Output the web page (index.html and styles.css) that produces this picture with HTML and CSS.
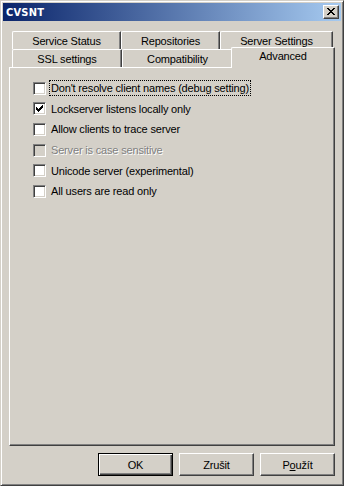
FILE: index.html
```html
<!DOCTYPE html>
<html>
<head>
<meta charset="utf-8">
<link rel="stylesheet" href="styles.css">
</head>
<body>
<div class="window">
  <div class="titlebar">
    <span class="title">CVSNT</span>
    <button class="close" type="button" aria-label="Close">
      <svg width="8" height="7" viewBox="0 0 8 7" shape-rendering="crispEdges">
        <rect x="0" y="0" width="2" height="1"/><rect x="6" y="0" width="2" height="1"/>
        <rect x="1" y="1" width="2" height="1"/><rect x="5" y="1" width="2" height="1"/>
        <rect x="2" y="2" width="4" height="1"/>
        <rect x="3" y="3" width="2" height="1"/>
        <rect x="2" y="4" width="4" height="1"/>
        <rect x="1" y="5" width="2" height="1"/><rect x="5" y="5" width="2" height="1"/>
        <rect x="0" y="6" width="2" height="1"/><rect x="6" y="6" width="2" height="1"/>
      </svg>
    </button>
  </div>
  <div class="content">
    <div class="tabs">
      <div class="tab-row">
        <div class="tab t-service">Service Status</div>
        <div class="tab t-repo">Repositories</div>
        <div class="tab t-server">Server Settings</div>
      </div>
      <div class="tab-row">
        <div class="tab t-ssl">SSL settings</div>
        <div class="tab t-compat">Compatibility</div>
        <div class="tab t-adv active">Advanced</div>
      </div>
    </div>
    <div class="panel">
      <div class="option">
        <span class="cb"></span>
        <span class="label focus">Don't resolve client names (debug setting)</span>
      </div>
      <div class="option">
        <span class="cb">
          <svg width="7" height="7" viewBox="0 0 7 7" shape-rendering="crispEdges">
            <rect x="6" y="0" width="1" height="1"/>
            <rect x="5" y="1" width="2" height="1"/>
            <rect x="0" y="2" width="1" height="1"/><rect x="4" y="2" width="3" height="1"/>
            <rect x="0" y="3" width="2" height="1"/><rect x="3" y="3" width="3" height="1"/>
            <rect x="0" y="4" width="5" height="1"/>
            <rect x="1" y="5" width="3" height="1"/>
            <rect x="2" y="6" width="1" height="1"/>
          </svg>
        </span>
        <span class="label">Lockserver listens locally only</span>
      </div>
      <div class="option">
        <span class="cb"></span>
        <span class="label">Allow clients to trace server</span>
      </div>
      <div class="option disabled">
        <span class="cb"></span>
        <span class="label">Server is case sensitive</span>
      </div>
      <div class="option">
        <span class="cb"></span>
        <span class="label">Unicode server (experimental)</span>
      </div>
      <div class="option">
        <span class="cb"></span>
        <span class="label">All users are read only</span>
      </div>
    </div>
    <div class="buttons">
      <button class="btn default" type="button">OK</button>
      <button class="btn" type="button">Zrušit</button>
      <button class="btn" type="button">P<u>o</u>užít</button>
    </div>
  </div>
</div>
</body>
</html>
```

FILE: styles.css
```css
html, body {
  margin: 0;
  padding: 0;
  background: #d4d0c8;
}

body {
  font-family: "Liberation Sans", Arial, sans-serif;
  font-size: 11px;
  letter-spacing: -0.17px;
  color: #000;
}

.window {
  width: 344px;
  height: 486px;
  box-sizing: border-box;
  background: #d4d0c8;
  border: 1px solid;
  border-color: #d4d0c8 #404040 #404040 #d4d0c8;
  box-shadow: inset 1px 1px #ffffff, inset -1px -1px #808080;
  padding: 2px;
  display: flex;
  flex-direction: column;
}

.titlebar {
  height: 18px;
  flex: none;
  display: flex;
  align-items: center;
  justify-content: space-between;
  padding: 0 2px;
  background: linear-gradient(to right, #0a246a, #a6caf0);
}

.title {
  color: #fff;
  font-family: "DejaVu Sans Condensed", "Liberation Sans", sans-serif;
  font-weight: bold;
  font-size: 11px;
  padding-left: 1px;
  letter-spacing: 0.2px;
}

.close {
  width: 16px;
  height: 14px;
  box-sizing: border-box;
  padding: 0;
  margin: 0;
  background: #d4d0c8;
  border: 1px solid;
  border-color: #ffffff #404040 #404040 #ffffff;
  box-shadow: inset -1px -1px #808080;
  display: flex;
  align-items: center;
  justify-content: center;
}

.close svg {
  display: block;
  margin-left: -1px;
  margin-top: -1px;
}

.content {
  flex: 1;
  display: flex;
  flex-direction: column;
  padding: 10px 6px 7px 6px;
}

.tabs {
  padding: 0 2px 0 3px;
}

.tab-row {
  display: flex;
  height: 18px;
}

.tab {
  flex: none;
  box-sizing: border-box;
  height: 18px;
  border-top: 1px solid #ffffff;
  border-left: 1px solid #ffffff;
  border-right: 1px solid #404040;
  border-top-left-radius: 2px;
  border-top-right-radius: 1px;
  box-shadow: inset -1px 0 #808080;
  background: #d4d0c8;
  text-align: center;
  line-height: 18px;
  white-space: nowrap;
}

.t-service { width: 109px; }
.t-repo { width: 99px; }
.t-server { width: 113px; }
.t-ssl { width: 110px; }
.t-compat { width: 111px; }
.t-adv { width: 100px; }

.tab.active {
  position: relative;
  z-index: 1;
  width: 104px;
  height: 21px;
  margin: -2px -2px 0 -2px;
  line-height: 17px;
}

.panel {
  height: 379px;
  flex: none;
  box-sizing: border-box;
  border: 1px solid;
  border-color: #ffffff #404040 #404040 #ffffff;
  box-shadow: inset -1px -1px #808080;
  padding: 10px 0 0 23px;
}

.option {
  display: flex;
  align-items: center;
  height: 20.6px;
}

.cb {
  flex: none;
  width: 13px;
  height: 13px;
  box-sizing: border-box;
  border: 1px solid;
  border-color: #808080 #ffffff #ffffff #808080;
  box-shadow: inset 1px 1px #404040, inset -1px -1px #d4d0c8;
  background: #ffffff;
  padding: 2px;
}

.cb svg {
  display: block;
}

.label {
  padding: 0 1px;
  height: 16px;
  line-height: 14px;
  box-sizing: border-box;
  border: 1px solid transparent;
  margin-left: 3px;
  white-space: nowrap;
}

.label.focus {
  border: 1px dotted #000;
}

.option.disabled .cb {
  background: #d4d0c8;
}

.option.disabled .label {
  color: #808080;
  text-shadow: 1px 1px 0 #ffffff;
}

.buttons {
  display: flex;
  justify-content: flex-end;
  gap: 6px;
  margin-top: 7px;
}

.btn {
  width: 75px;
  height: 23px;
  box-sizing: border-box;
  margin: 0;
  padding: 0;
  font-family: "Liberation Sans", Arial, sans-serif;
  font-size: 11px;
  letter-spacing: -0.17px;
  color: #000;
  background: #d4d0c8;
  border: 1px solid;
  border-color: #ffffff #404040 #404040 #ffffff;
  box-shadow: inset -1px -1px #808080;
}

.btn.default {
  border: 1px solid #000000;
  box-shadow: inset 1px 1px #ffffff, inset -1px -1px #404040, inset -2px -2px #808080;
}

.btn u {
  text-decoration: underline;
}
```
